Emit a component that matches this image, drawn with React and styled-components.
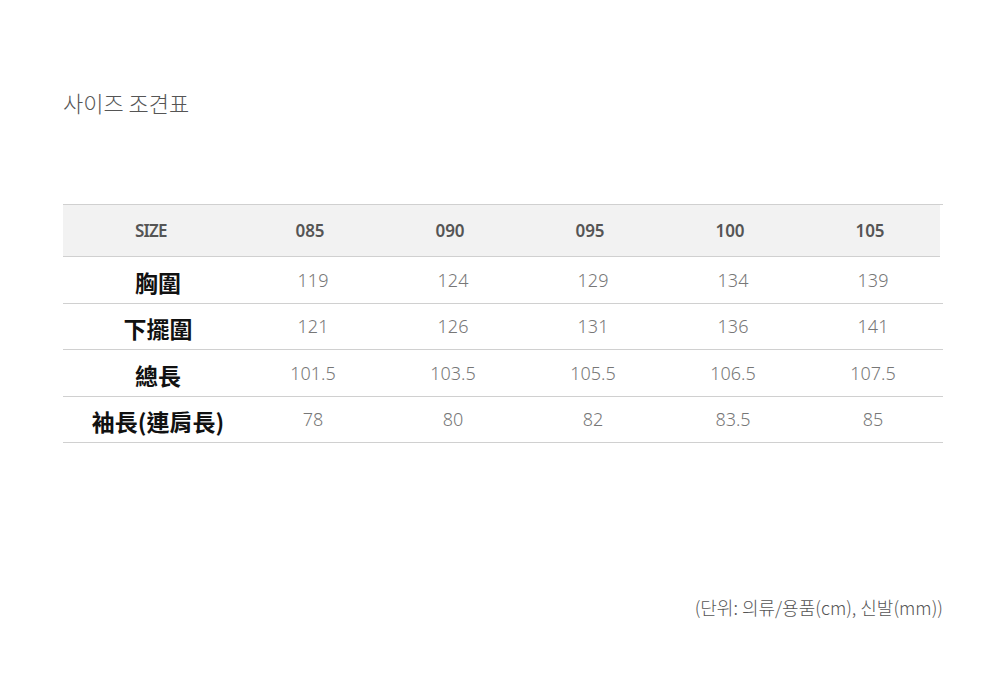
import React from "react";
import styled, { createGlobalStyle } from "styled-components";

const GlobalStyle = createGlobalStyle`
  html, body {
    margin: 0;
    padding: 0;
    background: #fff;
  }
  body {
    font-family: "Noto Sans", "Noto Sans CJK KR", sans-serif;
  }
`;

const Page = styled.div`
  width: 1008px;
  height: 700px;
  box-sizing: border-box;
  padding: 86px 65px 0 63px;
`;

const Title = styled.h2`
  margin: 0;
  font-family: "Noto Sans CJK KR", sans-serif;
  font-size: 22px;
  font-weight: 300;
  line-height: 32px;
  color: #555;
`;

const Table = styled.div`
  margin-top: 86px;
  display: grid;
  grid-template-columns: 180px repeat(5, 1fr);
  border-top: 1px solid #d0d0d0;
`;

const HeadCell = styled.div`
  height: 51px;
  display: flex;
  align-items: center;
  justify-content: ${p => (p.$first ? "flex-start" : "center")};
  padding-left: ${p => (p.$first ? "72px" : "0")};
  background: #f2f2f2;
  border-bottom: 1px solid #d0d0d0;
  font-family: "Noto Sans", sans-serif;
  font-size: 17px;
  font-weight: 600;
  color: #555;
  letter-spacing: ${p => (p.$first ? "-0.8px" : "0")};
  transform: ${p => (p.$first ? "none" : "translateX(-3px)")};
`;

const Label = styled.div`
  height: 46.5px;
  display: flex;
  align-items: center;
  justify-content: center;
  padding-left: 10px;
  padding-top: 4px;
  box-sizing: border-box;
  border-bottom: 1px solid #d0d0d0;
  font-family: "Noto Sans CJK TC", sans-serif;
  font-size: 23px;
  font-weight: 700;
  color: #111;
`;

const Cell = styled.div`
  height: 46.5px;
  display: flex;
  align-items: center;
  justify-content: center;
  box-sizing: border-box;
  border-bottom: 1px solid #d0d0d0;
  font-family: "Noto Sans", sans-serif;
  font-size: 18px;
  font-weight: 300;
  color: #777;
`;

const Note = styled.p`
  margin: 151px 0 0;
  text-align: right;
  font-family: "Noto Sans CJK KR", sans-serif;
  font-size: 18px;
  font-weight: 300;
  color: #555;
`;

const sizes = ["085", "090", "095", "100", "105"];

const rows = [
  { label: "胸圍", values: ["119", "124", "129", "134", "139"] },
  { label: "下擺圍", values: ["121", "126", "131", "136", "141"] },
  { label: "總長", values: ["101.5", "103.5", "105.5", "106.5", "107.5"] },
  { label: "袖長(連肩長)", values: ["78", "80", "82", "83.5", "85"] },
];

const App = () => {
  return (
    <Page>
      <GlobalStyle />
      <Title>사이즈 조견표</Title>
      <Table>
        <HeadCell $first>SIZE</HeadCell>
        {sizes.map(s => (
          <HeadCell key={s}>{s}</HeadCell>
        ))}
        {rows.map(r => (
          <React.Fragment key={r.label}>
            <Label>{r.label}</Label>
            {r.values.map((v, i) => (
              <Cell key={i}>{v}</Cell>
            ))}
          </React.Fragment>
        ))}
      </Table>
      <Note>(단위: 의류/용품(cm), 신발(mm))</Note>
    </Page>
  );
};

export default App;
